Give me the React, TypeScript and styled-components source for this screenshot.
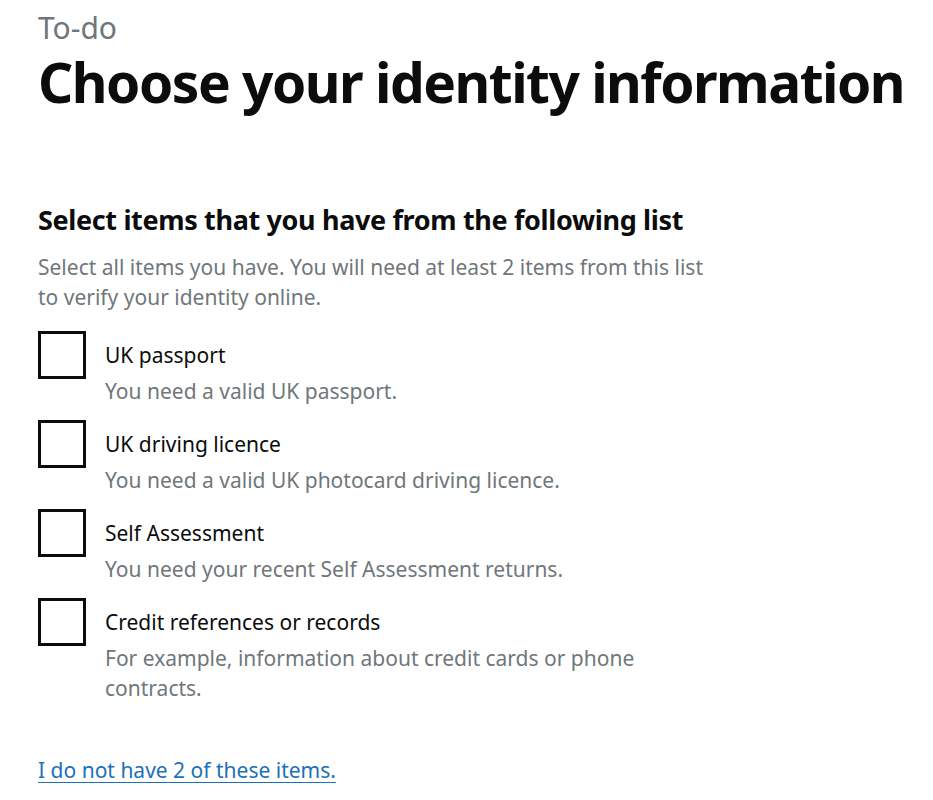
import * as React from "react";
import styled, {createGlobalStyle} from "styled-components";

const GlobalStyle = createGlobalStyle`
    html, body {
        margin: 0;
        padding: 0;
        background: #ffffff;
    }
    body {
        font-family: "Noto Sans", "Liberation Sans", sans-serif;
        color: #0b0c0c;
    }
`;

interface IItem {
    label: string,
    hint: string
}

const items: Array<IItem> = [
    {label: "UK passport", hint: "You need a valid UK passport."},
    {label: "UK driving licence", hint: "You need a valid UK photocard driving licence."},
    {label: "Self Assessment", hint: "You need your recent Self Assessment returns."},
    {label: "Credit references or records", hint: "For example, information about credit cards or phone contracts."},
];

const Page = styled.main`
    padding: 10px 38px 0 38px;
`;

const Caption = styled.span`
    display: block;
    font-size: 30px;
    line-height: 36px;
    color: #6f777b;
`;

const Heading = styled.h1`
    margin: 0 0 84px 0;
    font-size: 55px;
    line-height: 72px;
    font-weight: 700;
    letter-spacing: -1.5px;
    white-space: nowrap;
`;

const Fieldset = styled.fieldset`
    margin: 0;
    padding: 0;
    border: 0;
    max-width: 680px;
`;

const Legend = styled.legend`
    padding: 0;
    margin: 0 0 14px 0;
    font-size: 27px;
    line-height: 36px;
    font-weight: 700;
    letter-spacing: -0.35px;
    white-space: nowrap;
`;

const Hint = styled.div`
    font-size: 21px;
    line-height: 30px;
    color: #6f777b;
    margin: 0 0 19px 0;
`;

const ItemList = styled.div`
    display: flex;
    flex-direction: column;
    gap: 14px;
`;

const Item = styled.label`
    display: flex;
    gap: 19px;
    cursor: pointer;
`;

const Box = styled.span`
    flex: 0 0 auto;
    width: 48px;
    height: 48px;
    box-sizing: border-box;
    border: 3px solid #0b0c0c;
    background: #ffffff;
`;

const ItemText = styled.div`
    display: flex;
    flex-direction: column;
    padding-top: 9px;
    max-width: 560px;
`;

const ItemLabel = styled.span`
    font-size: 21px;
    line-height: 30px;
    margin-bottom: 6px;
`;

const ItemHint = styled.span`
    font-size: 21px;
    line-height: 30px;
    color: #6f777b;
`;

const Link = styled.a`
    display: inline-block;
    margin-top: 52px;
    font-size: 21px;
    line-height: 30px;
    color: #1d70b8;
    text-decoration: underline;
    text-underline-offset: 4px;
    text-decoration-thickness: 1px;
`;

export default function App() {
    return (
        <>
            <GlobalStyle/>
            <Page>
                <Caption>To-do</Caption>
                <Heading>Choose your identity information</Heading>
                <Fieldset>
                    <Legend>Select items that you have from the following list</Legend>
                    <Hint>Select all items you have. You will need at least 2 items from this list to verify your identity online.</Hint>
                    <ItemList>
                        {items.map(item => (
                            <Item key={item.label}>
                                <Box/>
                                <ItemText>
                                    <ItemLabel>{item.label}</ItemLabel>
                                    <ItemHint>{item.hint}</ItemHint>
                                </ItemText>
                            </Item>
                        ))}
                    </ItemList>
                </Fieldset>
                <Link href="#">I do not have 2 of these items.</Link>
            </Page>
        </>
    );
}
